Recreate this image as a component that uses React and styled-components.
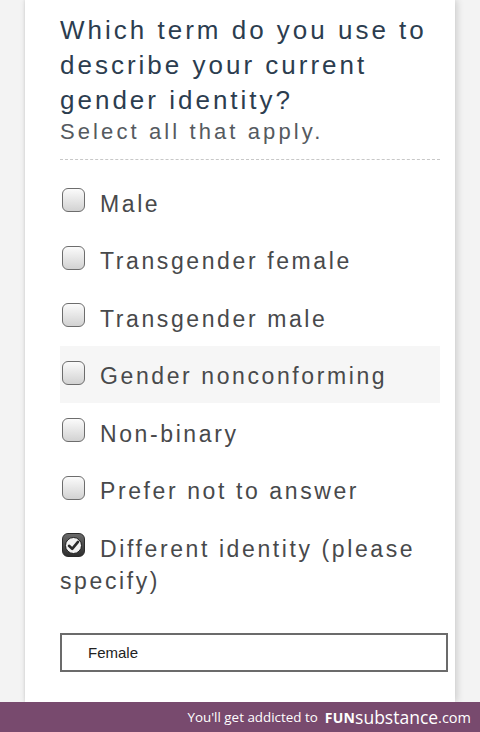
import React from "react";
import styled, { createGlobalStyle } from "styled-components";

const Global = createGlobalStyle`
  html, body { margin: 0; padding: 0; background: #f3f3f3; }
  body { font-family: "Liberation Sans", Arial, sans-serif; }
  * { box-sizing: border-box; }
`;

const Page = styled.div`
  height: 732px;
  display: flex;
  flex-direction: column;
  overflow: hidden;
`;

const Card = styled.div`
  flex: 1;
  margin: 0 25px 0 25px;
  width: 430px;
  background: #ffffff;
  box-shadow: 2px 0 7px rgba(0, 0, 0, 0.16), -1px 0 2px rgba(0, 0, 0, 0.06);
  padding: 13px 15px 0 35px;
`;

const Title = styled.h1`
  margin: 0;
  font-size: 26px;
  line-height: 35px;
  font-weight: 400;
  letter-spacing: 3px;
  color: #2c3d4f;
`;

const Hint = styled.div`
  font-size: 22px;
  line-height: 28px;
  letter-spacing: 3.1px;
  color: #555a60;
`;

const Divider = styled.div`
  margin-top: 13px;
  border-top: 1px dashed #c8c8c8;
`;

const List = styled.div`
  margin-top: 13px;
  display: flex;
  flex-direction: column;
`;

const Row = styled.label`
  display: block;
  padding: 14.5px 0 11px 0;
  font-size: 23px;
  line-height: 32px;
  letter-spacing: 2.6px;
  color: #48494b;
  background: ${(p) => (p.$hover ? "#f6f6f6" : "transparent")};
`;

const Box = styled.span`
  display: inline-flex;
  vertical-align: top;
  width: 23px;
  height: 24px;
  margin: 0.5px 15px 0 2px;
  border-radius: 6px;
  border: 1.5px solid ${(p) => (p.$checked ? "#2a2a2a" : "#6d6d6d")};
  background: ${(p) =>
    p.$checked
      ? "linear-gradient(#6a6a6a, #2e2e2e)"
      : "linear-gradient(#fbfbfb, #d2d2d2)"};
  align-items: center;
  justify-content: center;
`;

const TextInput = styled.input`
  display: block;
  margin-top: 25.5px;
  width: 388px;
  height: 39px;
  border: 2px solid #6b6b6b;
  border-radius: 0;
  padding: 0 0 0 26px;
  font-family: "Liberation Sans", Arial, sans-serif;
  font-size: 15px;
  color: #222;
  background: #fff;
  outline: none;
`;

const Footer = styled.div`
  height: 30px;
  flex: none;
  background: #784a6e;
  display: flex;
  align-items: center;
  justify-content: flex-end;
  padding-right: 9px;
  font-family: "Open Sans", "Noto Sans", sans-serif;
  color: #ffffff;
  white-space: nowrap;
`;

const Plain = styled.span`
  font-size: 13.4px;
  margin-right: 7px;
`;

const Fun = styled.span`
  font-size: 14px;
  font-weight: 700;
  letter-spacing: 0.2px;
`;

const Sub = styled.span`
  font-size: 17.5px;
`;

const Com = styled.span`
  font-size: 14.5px;
`;

const options = [
  { t: "Male" },
  { t: "Transgender female" },
  { t: "Transgender male" },
  { t: "Gender nonconforming", hover: true },
  { t: "Non-binary" },
  { t: "Prefer not to answer" },
];

export default function App() {
  return (
    <>
      <Global />
      <Page>
        <Card>
          <Title>Which term do you use to describe your current gender identity?</Title>
          <Hint>Select all that apply.</Hint>
          <Divider />
          <List>
            {options.map((o) => (
              <Row key={o.t} $hover={o.hover}>
                <Box />
                {o.t}
              </Row>
            ))}
            <Row>
              <Box $checked>
                <svg width="19" height="19" viewBox="0 0 19 19">
                  <circle cx="9.5" cy="9.5" r="8" fill="#f2f2f2" stroke="#1e1e1e" strokeWidth="1" />
                  <path
                    d="M5 9.8 L8.2 12.8 L14 5.8"
                    fill="none"
                    stroke="#2a2a2a"
                    strokeWidth="2.6"
                    strokeLinecap="round"
                    strokeLinejoin="round"
                  />
                </svg>
              </Box>
              Different identity (please specify)
            </Row>
          </List>
          <TextInput defaultValue="Female" readOnly />
        </Card>
        <Footer>
          <Plain>You'll get addicted to</Plain>
          <Fun>FUN</Fun>
          <Sub>substance</Sub>
          <Com>.com</Com>
        </Footer>
      </Page>
    </>
  );
}
